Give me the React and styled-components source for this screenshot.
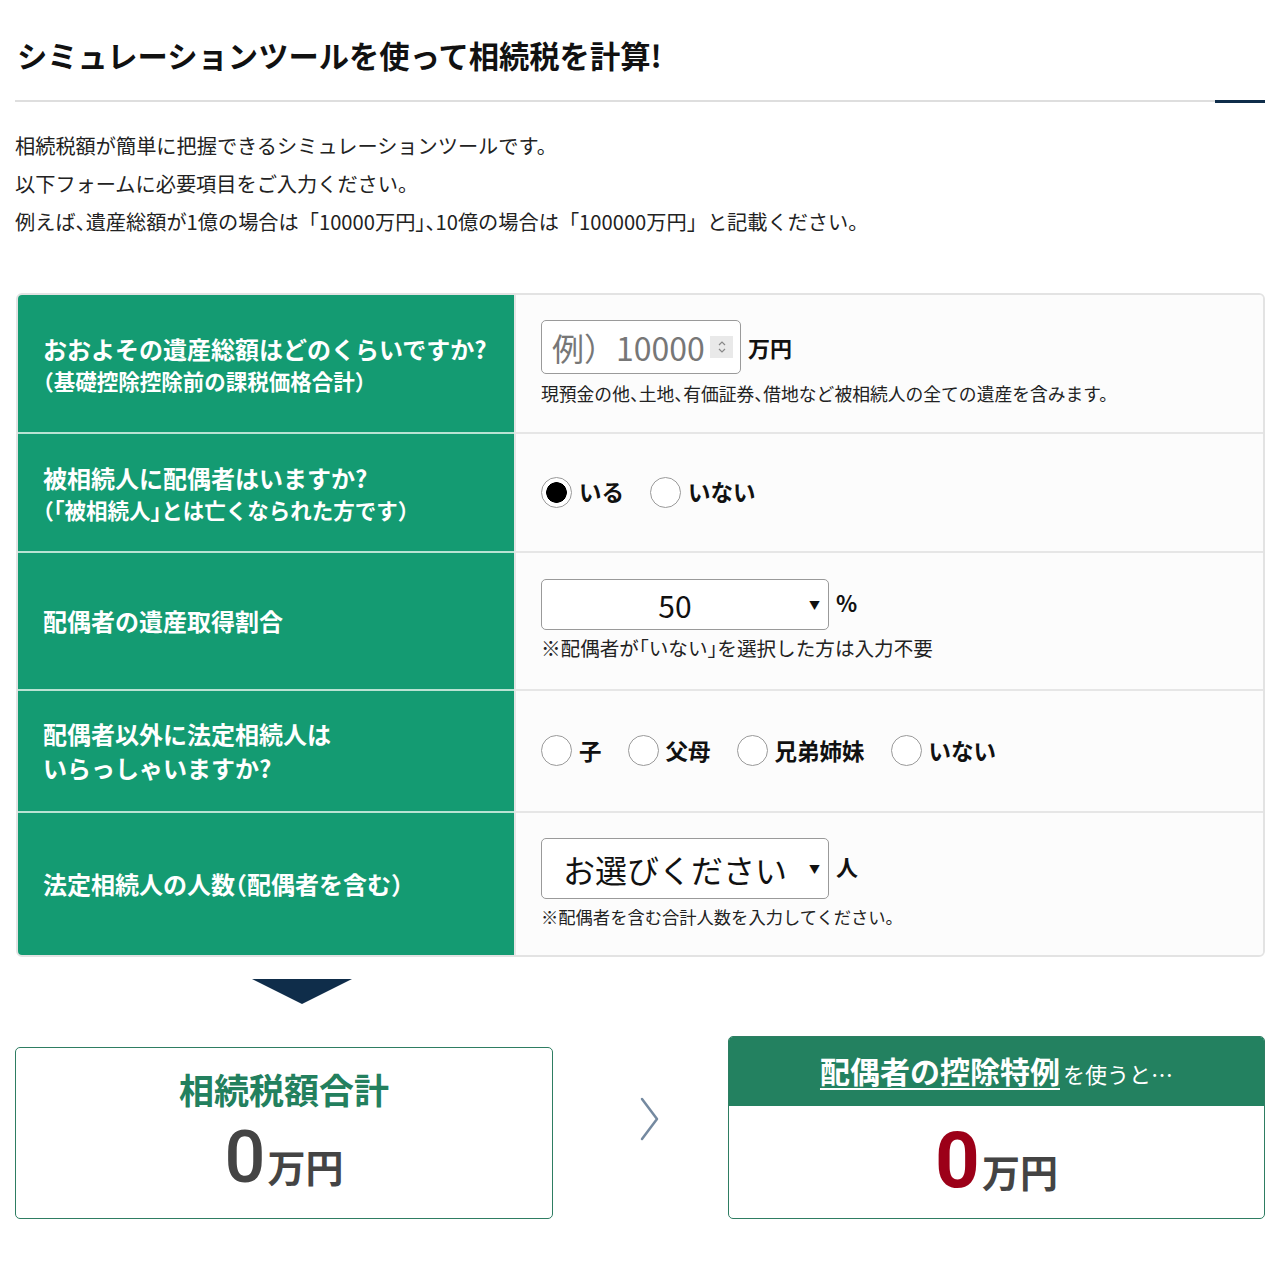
import React from 'react';
import styled, { createGlobalStyle } from 'styled-components';

const GlobalStyle = createGlobalStyle`
  body {
    margin: 0;
    background: #fff;
    font-family: "Noto Sans CJK JP", "Noto Sans", sans-serif;
    color: #222;
  }
`

const Page = styled.div`
  width: 1250px;
  padding: 34px 13px 60px 15px;
`

const TitleBar = styled.div`
  position: relative;
  border-bottom: 2px solid #dedede;
  padding: 0 0 23px 2px;

  &::after {
    content: "";
    position: absolute;
    right: 0;
    bottom: -3px;
    width: 50px;
    height: 3px;
    background: #0f2d4a;
  }
`

const Title = styled.h1`
  margin: 0;
  font-size: 30.3px;
  line-height: 43px;
  font-weight: 700;
  color: #111;
`

const Lead = styled.div`
  margin-top: 25px;
  font-size: 20.2px;
  line-height: 38px;
  color: #222;
  font-feature-settings: "halt";

  p { margin: 0; }
`

const Quote = styled.span`
  font-feature-settings: normal;
`

const FormTable = styled.div`
  margin-top: 52px;
  margin-left: 1px;
  border: 2px solid #e3e3e3;
  border-radius: 6px;
  overflow: hidden;
`

const Row = styled.div`
  display: grid;
  grid-template-columns: 496px 1fr;
  height: ${p => p.h}px;

  &:not(:first-child) > div:first-child { border-top: 2px solid #b9e3d3; }
  &:not(:first-child) > div:last-child { border-top: 2px solid #e6e6e6; }
`

const Label = styled.div`
  background: #149b72;
  color: #fff;
  font-weight: 700;
  font-size: 24px;
  line-height: 34px;
  padding: 0 20px 0 25px;
  display: flex;
  flex-direction: column;
  justify-content: center;
  font-feature-settings: "halt";

  small {
    font-size: 21.5px;
    line-height: 30px;
  }
`

const Cell = styled.div`
  background: #fcfcfc;
  border-left: 2px solid #e6e6e6;
  padding: 0 0 0 25px;
  display: flex;
  flex-direction: column;
  justify-content: center;
`

const Line = styled.div`
  display: flex;
  align-items: center;
  gap: 7px;
`

const Unit = styled.span`
  font-size: 22px;
  font-weight: 700;
  color: #111;
  margin-top: ${p => p.up ? -6 : 0}px;
`

const Note = styled.div`
  margin-top: ${p => p.gap || 6}px;
  font-size: ${p => p.size || 17.3}px;
  line-height: 1.45;
  color: #222;
  font-feature-settings: "halt";
`

const InputWrap = styled.div`
  position: relative;
  width: 200px;
  height: 54px;
`

const NumberInput = styled.input`
  box-sizing: border-box;
  width: 100%;
  height: 100%;
  border: 1px solid #9a9a9a;
  border-radius: 5px;
  background: #fff;
  padding: 0 30px 0 10px;
  font-family: "Noto Sans CJK JP", "Noto Sans", sans-serif;
  font-size: 32px;
  color: #111;
  outline: none;

  &::placeholder { color: #777; }
`

const Spinner = styled.span`
  position: absolute;
  right: 8px;
  top: 16px;
  width: 23px;
  height: 22px;
  background: #e9e9e9;
  display: flex;
  align-items: center;
  justify-content: center;
`

const SelectWrap = styled.div`
  position: relative;
  width: 288px;
  height: ${p => p.h}px;

  &::after {
    content: "▼";
    position: absolute;
    right: 9px;
    top: 50%;
    transform: translateY(-50%);
    font-size: 11px;
    color: #111;
    pointer-events: none;
  }
`

const Select = styled.select`
  appearance: none;
  box-sizing: border-box;
  width: 100%;
  height: 100%;
  border: 1px solid #9a9a9a;
  border-radius: 5px;
  background: #fff;
  padding: 0 20px 0 0;
  text-align-last: center;
  font-family: "Noto Sans CJK JP", "Noto Sans", sans-serif;
  font-size: ${p => p.fs}px;
  color: #111;
  outline: none;
`

const Radios = styled.div`
  display: flex;
  align-items: center;
  gap: 26px;
  margin-top: -3px;
`

const RadioLabel = styled.label`
  display: flex;
  align-items: center;
  gap: 7px;
  font-size: 22.5px;
  font-weight: 700;
  color: #111;
`

const Radio = styled.input`
  appearance: none;
  margin: 2px 0 0;
  width: 31px;
  height: 31px;
  border: 1px solid #9a9a9a;
  border-radius: 50%;
  background: #fff;

  &:checked {
    background: radial-gradient(circle, #000 0 10px, #fff 10.6px);
  }
`

const Arrow = styled.div`
  margin: 22px 0 0 237px;
  width: 0;
  height: 0;
  border-left: 50px solid transparent;
  border-right: 50px solid transparent;
  border-top: 25px solid #0f2d4a;
`

const Results = styled.div`
  margin-top: 32px;
  display: flex;
  align-items: flex-end;
`

const TotalBox = styled.div`
  box-sizing: border-box;
  width: 538px;
  height: 172px;
  border: 1px solid #2e7d62;
  border-radius: 5px;
  display: flex;
  flex-direction: column;
  align-items: center;
  padding-top: 22px;
`

const TotalTitle = styled.div`
  font-size: 35px;
  line-height: 38px;
  font-weight: 700;
  color: #23805e;
`

const Amount = styled.div`
  display: flex;
  align-items: baseline;
  line-height: 1;
  margin-top: ${p => p.mt || 0}px;
`

const Digit = styled.span`
  font-family: Roboto, "Noto Sans", sans-serif;
  font-size: ${p => p.size}px;
  font-weight: ${p => p.weight || 500};
  color: ${p => p.color || '#444'};
`

const Yen = styled.span`
  font-size: 38px;
  font-weight: 700;
  color: #444;
  margin-left: 2px;
`

const Middle = styled.div`
  flex: 1;
  align-self: stretch;
  display: flex;
  align-items: center;
  justify-content: center;
  padding: 0 0 18px 19px;
`

const SpecialBox = styled.div`
  box-sizing: border-box;
  width: 537px;
  height: 183px;
  border: 1px solid #2e7d62;
  border-radius: 5px;
  overflow: hidden;
  display: flex;
  flex-direction: column;
`

const SpecialHead = styled.div`
  height: 69px;
  background: #238160;
  color: #fff;
  display: flex;
  align-items: center;
  justify-content: center;
  padding-bottom: 4px;
  box-sizing: border-box;

  u {
    font-size: 30px;
    font-weight: 700;
    text-underline-offset: 5px;
    text-decoration-thickness: 2px;
  }
  span {
    font-size: 22px;
    margin-left: 3px;
    margin-top: 6px;
  }
`

const SpecialBody = styled.div`
  flex: 1;
  display: flex;
  align-items: center;
  justify-content: center;
  padding-bottom: 2px;
`

function App() {
  return (
    <Page>
      <GlobalStyle />
      <TitleBar>
        <Title>シミュレーションツールを使って相続税を計算!</Title>
      </TitleBar>
      <Lead>
        <p>相続税額が簡単に把握できるシミュレーションツールです。</p>
        <p>以下フォームに必要項目をご入力ください。</p>
        <p>
          例えば、遺産総額が1億の場合は<Quote>「</Quote>10000万円<Quote>」</Quote>、10億の場合は
          <Quote>「</Quote>100000万円<Quote>」</Quote>と記載ください。
        </p>
      </Lead>

      <FormTable>
        <Row h={137}>
          <Label>
            おおよその遺産総額はどのくらいですか?
            <small>（基礎控除控除前の課税価格合計）</small>
          </Label>
          <Cell>
            <Line>
              <InputWrap>
                <NumberInput type="text" inputMode="numeric" placeholder="例）10000" />
                <Spinner>
                  <svg width="10" height="16" viewBox="0 0 10 16" fill="none" stroke="#888" strokeWidth="1.2">
                    <polyline points="2,6 5,3 8,6" />
                    <polyline points="2,10 5,13 8,10" />
                  </svg>
                </Spinner>
              </InputWrap>
              <Unit>万円</Unit>
            </Line>
            <Note gap={7} size={17.8}>現預金の他、土地、有価証券、借地など被相続人の全ての遺産を含みます。</Note>
          </Cell>
        </Row>

        <Row h={119}>
          <Label>
            被相続人に配偶者はいますか?
            <small>（「被相続人」とは亡くなられた方です）</small>
          </Label>
          <Cell>
            <Radios>
              <RadioLabel><Radio type="radio" name="spouse" defaultChecked />いる</RadioLabel>
              <RadioLabel><Radio type="radio" name="spouse" />いない</RadioLabel>
            </Radios>
          </Cell>
        </Row>

        <Row h={138}>
          <Label>配偶者の遺産取得割合</Label>
          <Cell>
            <Line>
              <SelectWrap h={51}>
                <Select fs={30} defaultValue="50">
                  <option value="0">0</option>
                  <option value="50">50</option>
                  <option value="100">100</option>
                </Select>
              </SelectWrap>
              <Unit up>%</Unit>
            </Line>
            <Note gap={4} size={19.6}>※配偶者が「いない」を選択した方は入力不要</Note>
          </Cell>
        </Row>

        <Row h={122}>
          <Label>
            配偶者以外に法定相続人は
            <br />いらっしゃいますか?
          </Label>
          <Cell>
            <Radios>
              <RadioLabel><Radio type="radio" name="heir" />子</RadioLabel>
              <RadioLabel><Radio type="radio" name="heir" />父母</RadioLabel>
              <RadioLabel><Radio type="radio" name="heir" />兄弟姉妹</RadioLabel>
              <RadioLabel><Radio type="radio" name="heir" />いない</RadioLabel>
            </Radios>
          </Cell>
        </Row>

        <Row h={144}>
          <Label>法定相続人の人数（配偶者を含む）</Label>
          <Cell>
            <Line>
              <SelectWrap h={61}>
                <Select fs={32} defaultValue="">
                  <option value="">お選びください</option>
                  <option value="1">1</option>
                  <option value="2">2</option>
                  <option value="3">3</option>
                </Select>
              </SelectWrap>
              <Unit up>人</Unit>
            </Line>
            <Note gap={5}>※配偶者を含む合計人数を入力してください。</Note>
          </Cell>
        </Row>
      </FormTable>

      <Arrow />

      <Results>
        <TotalBox>
          <TotalTitle>相続税額合計</TotalTitle>
          <Amount mt={14}>
            <Digit size={72}>0</Digit>
            <Yen>万円</Yen>
          </Amount>
        </TotalBox>

        <Middle>
          <svg width="22" height="46" viewBox="0 0 22 46" fill="none">
            <polyline points="3,3 18,23 3,43" stroke="#7489a0" strokeWidth="2.5" strokeLinecap="round" strokeLinejoin="round" />
          </svg>
        </Middle>

        <SpecialBox>
          <SpecialHead>
            <u>配偶者の控除特例</u>
            <span>を使うと…</span>
          </SpecialHead>
          <SpecialBody>
            <Amount>
              <Digit size={78} weight={700} color="#9c0018">0</Digit>
              <Yen>万円</Yen>
            </Amount>
          </SpecialBody>
        </SpecialBox>
      </Results>
    </Page>
  );
}

export default App;
